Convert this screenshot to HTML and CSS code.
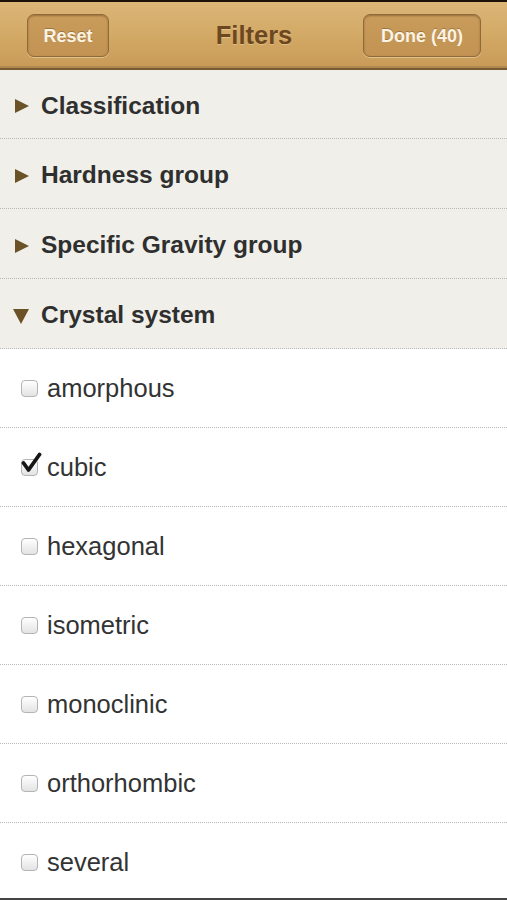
FILE: index.html
```html
<!DOCTYPE html>
<html>
<head>
<meta charset="utf-8">
<link rel="stylesheet" href="styles.css">
</head>
<body>
<div class="app">
  <header class="navbar">
    <div class="nav-left"><button class="nav-btn reset">Reset</button></div>
    <div class="nav-title">Filters</div>
    <div class="nav-right"><button class="nav-btn done">Done (40)</button></div>
  </header>
  <div class="group first"><span class="tri-right"></span><span class="group-title">Classification</span></div>
  <div class="group"><span class="tri-right"></span><span class="group-title">Hardness group</span></div>
  <div class="group"><span class="tri-right"></span><span class="group-title">Specific Gravity group</span></div>
  <div class="group"><span class="tri-down"></span><span class="group-title">Crystal system</span></div>
  <div class="item"><span class="box"></span><span class="item-label">amorphous</span></div>
  <div class="item"><span class="box"><svg class="check" viewBox="0 0 22 22"><path d="M2.5 11 L7.5 18 L18.5 2.5" fill="none" stroke="#151515" stroke-width="3.8" stroke-linecap="round" stroke-linejoin="round"/></svg></span><span class="item-label">cubic</span></div>
  <div class="item"><span class="box"></span><span class="item-label">hexagonal</span></div>
  <div class="item"><span class="box"></span><span class="item-label">isometric</span></div>
  <div class="item"><span class="box"></span><span class="item-label">monoclinic</span></div>
  <div class="item"><span class="box"></span><span class="item-label">orthorhombic</span></div>
  <div class="item"><span class="box"></span><span class="item-label">several</span></div>
</div>
<div class="bottom-edge"></div>
</body>
</html>
```
FILE: styles.css
```css
html, body {
  margin: 0;
  padding: 0;
  height: 100%;
  overflow: hidden;
  background: #fff;
}
body {
  font-family: "Liberation Sans", Arial, sans-serif;
}
.app {
  display: flex;
  flex-direction: column;
}
.navbar {
  box-sizing: border-box;
  height: 70px;
  border-top: 2px solid #1a1208;
  border-bottom: 2px solid #7a5a30;
  background: linear-gradient(#dbb678, #d3a966 50%, #c89a57);
  display: grid;
  grid-template-columns: 1fr auto 1fr;
  align-items: center;
  padding: 0 26px 0 27px;
  box-shadow: inset 0 -2px 0 #b08850;
}
.nav-left { display: flex; justify-content: flex-start; }
.nav-right { display: flex; justify-content: flex-end; }
.nav-btn {
  box-sizing: border-box;
  height: 43px;
  margin-top: 0;
  border: 1px solid #8e6a38;
  border-radius: 7px;
  background: linear-gradient(#c99c5b, #c29353);
  box-shadow: inset 0 1px 2px rgba(90,60,20,0.45), 0 1px 0 rgba(255,235,200,0.45);
  color: #fbf3e3;
  font-family: "Liberation Sans", Arial, sans-serif;
  font-weight: bold;
  font-size: 18px;
  padding: 3px 0 0 0;
  text-shadow: 0 -1px 0 rgba(80,50,10,0.35);
}
.reset { width: 82px; }
.done { width: 118px; }
.nav-title {
  color: #6c4720;
  font-weight: bold;
  font-size: 25.5px;
  margin-top: 1px;
  text-shadow: 0 1px 0 rgba(255,230,180,0.4);
}
.group {
  box-sizing: border-box;
  height: 70px;
  background: #f0efe9;
  border-bottom: 1px dotted #b8b8b4;
  display: flex;
  align-items: center;
  padding-left: 15px;
  padding-top: 3px;
}
.group.first { height: 69px; }
.tri-right {
  width: 0;
  height: 0;
  border-top: 7px solid transparent;
  border-bottom: 7px solid transparent;
  border-left: 14px solid #6b5327;
  margin-right: 12px;
  margin-top: 1px;
}
.tri-down {
  width: 0;
  height: 0;
  border-left: 8px solid transparent;
  border-right: 8px solid transparent;
  border-top: 15px solid #6b5327;
  margin-left: -2px;
  margin-right: 12px;
  margin-top: 2px;
}
.group-title {
  color: #2f2f2f;
  font-weight: bold;
  font-size: 24.5px;
}
.item {
  box-sizing: border-box;
  height: 79px;
  background: #fff;
  border-bottom: 1px dotted #b8b8b4;
  display: flex;
  align-items: center;
  padding-left: 21px;
}
.box {
  position: relative;
  box-sizing: border-box;
  width: 17px;
  height: 17px;
  border: 1px solid #b4b4b4;
  border-radius: 4px;
  background: linear-gradient(#ffffff, #e3e3e3);
  margin-right: 9px;
  margin-top: 1px;
}
.check {
  position: absolute;
  left: -1px;
  top: -8px;
  width: 22px;
  height: 22px;
}
.item-label {
  color: #333;
  font-size: 25.5px;
}
.bottom-edge {
  position: fixed;
  left: 0;
  right: 0;
  bottom: 0;
  height: 2px;
  background: #444;
}
```
